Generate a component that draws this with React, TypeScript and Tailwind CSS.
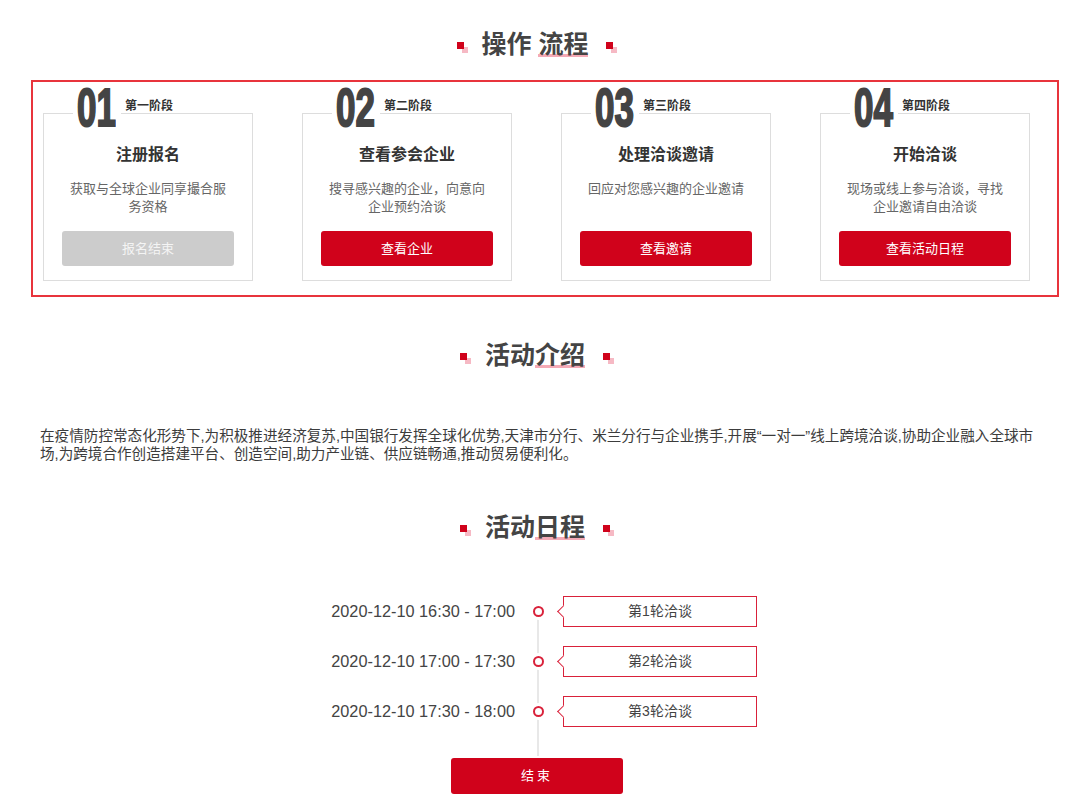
import React from "react";

const steps = [
  { n: "01", label: "第一阶段", title: "注册报名", desc: "获取与全球企业同享撮合服务资格", btn: "报名结束", disabled: true },
  { n: "02", label: "第二阶段", title: "查看参会企业", desc: "搜寻感兴趣的企业，向意向企业预约洽谈", btn: "查看企业", disabled: false },
  { n: "03", label: "第三阶段", title: "处理洽谈邀请", desc: "回应对您感兴趣的企业邀请", btn: "查看邀请", disabled: false },
  { n: "04", label: "第四阶段", title: "开始洽谈", desc: "现场或线上参与洽谈，寻找企业邀请自由洽谈", btn: "查看活动日程", disabled: false },
];

const rounds = [
  { time: "2020-12-10 16:30 - 17:00", name: "第1轮洽谈" },
  { time: "2020-12-10 17:00 - 17:30", name: "第2轮洽谈" },
  { time: "2020-12-10 17:30 - 18:00", name: "第3轮洽谈" },
];

function Dot() {
  return (
    <span className="relative inline-block w-[7px] h-[7px] mt-[2px]">
      <span className="absolute left-[5px] top-[5px] w-[6px] h-[6px] bg-[#f6b9c4]" />
      <span className="absolute left-0 top-0 w-[7px] h-[7px] bg-[#d0021b]" />
    </span>
  );
}

function Title({ a, b }: { a: string; b: string }) {
  return (
    <div className="flex items-center justify-center h-[30px] pr-[10px]">
      <Dot />
      <h2 className="mx-[18px] text-[25px] leading-[30px] font-bold text-[#444] whitespace-pre">
        {a}
        <span className="relative inline-block">
          <span className="absolute left-0 right-0 bottom-[2px] h-[3px] bg-[#f4aab6]" />
          <span className="relative">{b}</span>
        </span>
      </h2>
      <Dot />
    </div>
  );
}

export default function App() {
  return (
    <div className="w-[1080px] min-h-[810px] bg-white pt-[29px] [font-family:'Liberation_Sans','Noto_Sans_CJK_SC',sans-serif]">
      <Title a="操作 " b="流程" />

      <div className="mt-[21px] ml-[31px] w-[1028px] h-[217px] border-2 border-[#e8343c] flex gap-[49px] pl-[10px] pt-[31px]">
        {steps.map((s) => (
          <div key={s.n} className="relative w-[210px] h-[168px] border border-[#dddddd] flex flex-col items-center pt-[29px]">
            <div className="absolute left-[29px] top-[-3px] w-[48px] h-[5px] bg-white" />
            <span className="absolute left-[33px] top-[-33px] text-[53px] leading-none font-bold text-[#444] origin-left scale-x-[0.66] [-webkit-text-stroke:2px_#444] [font-family:'Liberation_Sans',sans-serif]">
              {s.n}
            </span>
            <span className="absolute left-[81px] top-[-14px] text-[12px] leading-[12px] font-bold text-[#333]">
              {s.label}
            </span>
            <div className="text-[16px] leading-[24px] font-bold text-[#333]">{s.title}</div>
            <div className="mt-[13px] w-[160px] text-center text-[13px] leading-[18px] text-[#666]">{s.desc}</div>
            <button
              className={
                s.disabled
                  ? "mt-auto mb-[14px] w-[172px] h-[35px] rounded-[3px] bg-[#cccccc] text-[#f4f4f4] text-[13px]"
                  : "mt-auto mb-[14px] w-[172px] h-[35px] rounded-[3px] bg-[#d0021b] text-white text-[13px]"
              }
            >
              {s.btn}
            </button>
          </div>
        ))}
      </div>

      <div className="mt-[43px]">
        <Title a="活动" b="介绍" />
      </div>

      <p className="mt-[57px] ml-[40px] w-[996px] text-[14.6px] leading-[18px] text-[#3c3c3c]">
        在疫情防控常态化形势下,为积极推进经济复苏,中国银行发挥全球化优势,天津市分行、米兰分行与企业携手,开展“一对一”线上跨境洽谈,协助企业融入全球市场,为跨境合作创造搭建平台、创造空间,助力产业链、供应链畅通,推动贸易便利化。
      </p>

      <div className="mt-[49px]">
        <Title a="活动" b="日程" />
      </div>

      <div className="relative mt-[54px] ml-[315px] w-[442px] pb-[10px]">
        <div className="absolute left-[222px] top-[15px] bottom-0 w-[2px] bg-[#e8e8e8]" />
        {rounds.map((r) => (
          <div key={r.name} className="relative flex h-[50px]">
            <div className="w-[200px] h-[31px] leading-[31px] text-right text-[16.3px] text-[#444]">{r.time}</div>
            <div className="ml-[18px] mt-[10px] w-[11px] h-[11px] rounded-full border-2 border-[#d9213a] bg-white ring-[3px] ring-white" />
            <div className="relative ml-[19px] w-[194px] h-[31px] border border-[#d9213a] text-center leading-[29px] text-[14px] text-[#444]">
              <span className="absolute left-[-5px] top-[10px] w-[9px] h-[9px] rotate-45 border-l border-b border-[#d9213a] bg-white" />
              {r.name}
            </div>
          </div>
        ))}
      </div>

      <button className="block mt-[2px] ml-[451px] w-[172px] h-[36px] rounded-[3px] bg-[#d0021b] text-white text-[13px] tracking-[3px]">
        结束
      </button>
    </div>
  );
}
